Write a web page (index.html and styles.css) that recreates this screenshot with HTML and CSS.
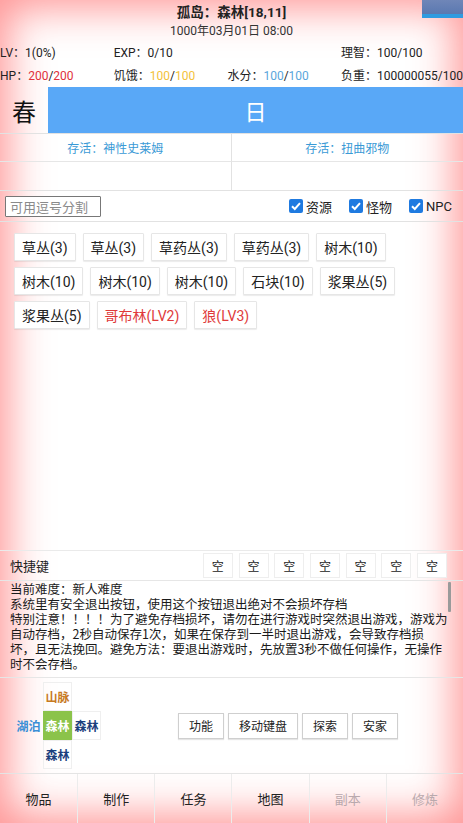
FILE: index.html
```html
<!DOCTYPE html>
<html lang="zh-CN">
<head>
<meta charset="utf-8">
<title>孤岛</title>
<link rel="stylesheet" href="styles.css">
</head>
<body>
<div class="app">
  <div class="corner"></div>
  <header class="top">
    <div class="title">孤岛：森林[18,11]</div>
    <div class="date">1000年03月01日 08:00</div>
    <div class="stats">
      <span>LV：1(0%)</span>
      <span>EXP：0/10</span>
      <span></span>
      <span>理智：100/100</span>
      <span>HP：<em class="red">200</em>/<em class="red">200</em></span>
      <span>饥饿：<em class="yellow">100</em>/<em class="yellow">100</em></span>
      <span>水分：<em class="blue">100</em>/<em class="blue">100</em></span>
      <span class="clip">负重：100000055/100</span>
    </div>
  </header>

  <div class="season">
    <div class="season-name">春</div>
    <div class="daytime">日</div>
  </div>

  <div class="alive">
    <div class="alive-cell">存活：神性史莱姆</div>
    <div class="alive-cell">存活：扭曲邪物</div>
    <div class="alive-cell"></div>
    <div class="alive-cell"></div>
  </div>

  <div class="filter">
    <input class="search" type="text" placeholder="可用逗号分割">
    <div class="checks">
      <label class="check"><span class="box"><svg viewBox="0 0 14 14" width="14" height="14"><path d="M3 7.2 L5.8 10 L11 4.2" fill="none" stroke="#fff" stroke-width="2"/></svg></span>资源</label>
      <label class="check"><span class="box"><svg viewBox="0 0 14 14" width="14" height="14"><path d="M3 7.2 L5.8 10 L11 4.2" fill="none" stroke="#fff" stroke-width="2"/></svg></span>怪物</label>
      <label class="check"><span class="box"><svg viewBox="0 0 14 14" width="14" height="14"><path d="M3 7.2 L5.8 10 L11 4.2" fill="none" stroke="#fff" stroke-width="2"/></svg></span>NPC</label>
    </div>
  </div>

  <div class="objects">
    <button class="obj">草丛(3)</button>
    <button class="obj">草丛(3)</button>
    <button class="obj">草药丛(3)</button>
    <button class="obj">草药丛(3)</button>
    <button class="obj">树木(10)</button>
    <button class="obj">树木(10)</button>
    <button class="obj">树木(10)</button>
    <button class="obj">树木(10)</button>
    <button class="obj">石块(10)</button>
    <button class="obj">浆果丛(5)</button>
    <button class="obj">浆果丛(5)</button>
    <button class="obj monster">哥布林(LV2)</button>
    <button class="obj monster">狼(LV3)</button>
  </div>

  <div class="hotkeys">
    <span class="hk-label">快捷键</span>
    <div class="hk-slots">
      <button class="slot">空</button>
      <button class="slot">空</button>
      <button class="slot">空</button>
      <button class="slot">空</button>
      <button class="slot">空</button>
      <button class="slot">空</button>
      <button class="slot">空</button>
    </div>
  </div>

  <div class="log">
    <div class="log-text">当前难度：新人难度<br>系统里有安全退出按钮，使用这个按钮退出绝对不会损坏存档<br>特别注意！！！！为了避免存档损坏，请勿在进行游戏时突然退出游戏，游戏为自动存档，2秒自动保存1次，如果在保存到一半时退出游戏，会导致存档损坏，且无法挽回。避免方法：要退出游戏时，先放置3秒不做任何操作，无操作时不会存档。</div>
    <div class="scrollbar"></div>
  </div>

  <div class="nav">
    <div class="map">
      <span class="tile empty"></span>
      <span class="tile mountain">山脉</span>
      <span class="tile empty"></span>
      <span class="tile lake">湖泊</span>
      <span class="tile here">森林</span>
      <span class="tile forest">森林</span>
      <span class="tile empty"></span>
      <span class="tile forest">森林</span>
      <span class="tile empty"></span>
    </div>
    <div class="actions">
      <button class="act">功能</button>
      <button class="act">移动键盘</button>
      <button class="act">探索</button>
      <button class="act">安家</button>
    </div>
  </div>

  <nav class="tabs">
    <span class="tab">物品</span>
    <span class="tab">制作</span>
    <span class="tab">任务</span>
    <span class="tab">地图</span>
    <span class="tab off">副本</span>
    <span class="tab off">修炼</span>
  </nav>
</div>
</body>
</html>
```

FILE: styles.css
```css
* { box-sizing: border-box; }

html, body {
  margin: 0;
  padding: 0;
  background: #fff;
}

body {
  font-family: Roboto, "Noto Sans CJK SC", sans-serif;
  color: #222;
}

.app {
  position: relative;
  width: 463px;
  height: 823px;
  display: flex;
  flex-direction: column;
  overflow: hidden;
  background: #fff;
  box-shadow: inset 0 0 42px 8px rgba(255, 60, 60, 0.55);
}

.corner {
  position: absolute;
  top: 0;
  right: 0;
  width: 41px;
  height: 18px;
  background: linear-gradient(#6f86b8, #5a78b0 80%, #2f9be0 80%);
}

/* header */
.top {
  display: flex;
  flex-direction: column;
}

.title {
  height: 23px;
  line-height: 24px;
  text-align: center;
  font-size: 13.5px;
  font-weight: bold;
  color: #222;
}

.date {
  height: 17px;
  line-height: 17px;
  text-align: center;
  font-size: 12px;
  color: #333;
}

.stats {
  display: grid;
  grid-template-columns: repeat(4, 1fr);
  grid-template-rows: 22px 25px;
  align-items: center;
  font-size: 12px;
  color: #222;
  white-space: nowrap;
}

.stats em { font-style: normal; }
.red { color: #e0303a; }
.yellow { color: #f3c23a; }
.blue { color: #5aa6dc; }

/* season */
.season {
  display: flex;
  height: 46px;
}

.season-name {
  width: 48px;
  display: flex;
  align-items: center;
  justify-content: center;
  font-size: 24px;
  color: #111;
}

.daytime {
  flex: 1;
  background: #59a8f7;
  color: #fff;
  font-size: 22px;
  display: flex;
  align-items: center;
  justify-content: center;
}

/* alive grid */
.alive {
  display: grid;
  grid-template-columns: 1fr 1fr;
  grid-auto-rows: 28px;
  border-top: 1px solid #e2e2e2;
  border-bottom: 1px solid #e2e2e2;
}

.alive-cell {
  display: flex;
  align-items: center;
  justify-content: center;
  font-size: 12px;
  color: #3a9ad6;
  border-bottom: 1px solid #e6e6e6;
}

.alive-cell:nth-child(odd) { border-right: 1px solid #e2e2e2; }
.alive-cell:nth-last-child(-n+2) { border-bottom: none; }

/* filter */
.filter {
  display: flex;
  align-items: center;
  justify-content: space-between;
  height: 31px;
  padding: 0 11px 0 5px;
  border-bottom: 1px solid #e2e2e2;
}

.search {
  width: 96px;
  height: 21px;
  border: 1px solid #777;
  border-radius: 1px;
  padding: 0 4px;
  font-family: "Noto Sans CJK SC", sans-serif;
  font-size: 13px;
  background: #fff;
  outline: none;
}

.search::placeholder { color: #8a8a8a; }

.checks {
  display: flex;
  gap: 17px;
}

.check {
  display: flex;
  align-items: center;
  gap: 3px;
  font-size: 13px;
  color: #222;
}

.box {
  width: 14px;
  height: 14px;
  border-radius: 2px;
  background: #1f7ae0;
  display: flex;
}

/* objects */
.objects {
  flex: 1;
  display: flex;
  flex-wrap: wrap;
  align-content: flex-start;
  gap: 6px 7px;
  padding: 11px 14px 0 14px;
}

.obj {
  height: 28px;
  padding: 0 7px;
  border: 1px solid #e6e6e6;
  border-radius: 1px;
  background: #fff;
  box-shadow: 0 1px 1px rgba(0, 0, 0, 0.08);
  font-family: Roboto, "Noto Sans CJK SC", sans-serif;
  font-size: 14px;
  color: #222;
}

.obj.monster { color: #e03a3a; }

/* hotkeys */
.hotkeys {
  display: flex;
  align-items: center;
  justify-content: space-between;
  height: 30px;
  padding: 0 16px 0 10px;
  border-top: 1px solid #eaeaea;
}

.hk-label { font-size: 13px; color: #222; }

.hk-slots {
  display: flex;
  gap: 5.7px;
}

.slot {
  width: 30px;
  height: 25px;
  padding: 0;
  border: 1px solid #eeeeee;
  background: #fff;
  font-family: "Noto Sans CJK SC", sans-serif;
  font-size: 12px;
  color: #222;
}

/* log */
.log {
  position: relative;
  height: 98px;
  padding: 0 15px 0 10px;
  border-top: 1px solid #e6e6e6;
  border-bottom: 1px solid #e6e6e6;
  overflow: hidden;
}

.log-text {
  font-family: "Noto Sans CJK SC", sans-serif;
  font-size: 12.5px;
  line-height: 15px;
  color: #1a1a1a;
}

.scrollbar {
  position: absolute;
  top: 1px;
  right: 12px;
  width: 3px;
  height: 30px;
  background: #9a9a9a;
  border-radius: 1px;
}

/* nav */
.nav {
  display: flex;
  align-items: center;
  height: 95px;
  padding: 0 0 0 14px;
}

.map {
  display: grid;
  grid-template-columns: repeat(3, 29px);
  grid-template-rows: repeat(3, 29px);
}

.tile {
  display: flex;
  align-items: center;
  justify-content: center;
  font-family: "Noto Sans CJK SC", sans-serif;
  font-size: 12px;
  font-weight: bold;
  border: 1px solid #efefef;
}

.tile.empty { border-color: transparent; }
.tile.mountain { color: #c77a1f; }
.tile.lake { color: #3b8fd6; border-color: transparent; }
.tile.forest { color: #1b3f7d; }
.tile.here { color: #fff; background: #8bc34a; border-color: #8bc34a; }

.actions {
  display: flex;
  gap: 4px;
  margin-left: 77px;
}

.act {
  height: 26px;
  padding: 0 10px;
  border: 1px solid #cfcfcf;
  background: #fff;
  box-shadow: 0 1px 1px rgba(0, 0, 0, 0.1);
  font-family: "Noto Sans CJK SC", sans-serif;
  font-size: 12px;
  color: #222;
}

/* tabs */
.tabs {
  display: grid;
  grid-template-columns: repeat(6, 1fr);
  height: 50px;
  border-top: 1px solid #e4e4e4;
}

.tab {
  display: flex;
  align-items: center;
  justify-content: center;
  font-family: "Noto Sans CJK SC", sans-serif;
  font-size: 13px;
  color: #222;
  border-left: 1px solid #ececec;
}

.tab:first-child { border-left: none; }
.tab.off { color: #b9a9ad; }
```
